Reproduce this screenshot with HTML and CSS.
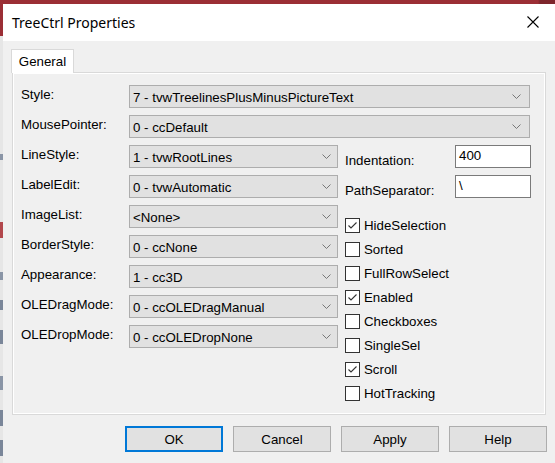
FILE: index.html
```html
<!DOCTYPE html>
<html>
<head>
<meta charset="utf-8">
<title>TreeCtrl Properties</title>
<link rel="stylesheet" href="styles.css">
</head>
<body>
<div class="screen">
  <div class="topbar"></div>
  <div class="main">
    <div class="edge"></div>
    <div class="window">
      <div class="titlebar">
        <span class="title">TreeCtrl Properties</span>
        <svg class="close" width="12" height="12" viewBox="0 0 12 12"><path d="M0.5 0.5 L11.5 11.5 M11.5 0.5 L0.5 11.5" stroke="#000" stroke-width="1.1" fill="none"/></svg>
      </div>
      <div class="client">
        <div class="tabs"><div class="tab">General</div></div>
        <div class="panel">
          <div class="row">
            <span class="lbl">Style:</span>
            <div class="combo long"><span>7 - tvwTreelinesPlusMinusPictureText</span><svg class="chev" width="9" height="5" viewBox="0 0 9 5"><path d="M0.5 0.5 L4.5 4.5 L8.5 0.5" stroke="#777" fill="none"/></svg></div>
          </div>
          <div class="row">
            <span class="lbl">MousePointer:</span>
            <div class="combo long"><span>0 - ccDefault</span><svg class="chev" width="9" height="5" viewBox="0 0 9 5"><path d="M0.5 0.5 L4.5 4.5 L8.5 0.5" stroke="#777" fill="none"/></svg></div>
          </div>
          <div class="split">
            <div class="left">
              <div class="row"><span class="lbl">LineStyle:</span><div class="combo short"><span>1 - tvwRootLines</span><svg class="chev" width="9" height="5" viewBox="0 0 9 5"><path d="M0.5 0.5 L4.5 4.5 L8.5 0.5" stroke="#777" fill="none"/></svg></div></div>
              <div class="row"><span class="lbl">LabelEdit:</span><div class="combo short"><span>0 - tvwAutomatic</span><svg class="chev" width="9" height="5" viewBox="0 0 9 5"><path d="M0.5 0.5 L4.5 4.5 L8.5 0.5" stroke="#777" fill="none"/></svg></div></div>
              <div class="row"><span class="lbl">ImageList:</span><div class="combo short"><span>&lt;None&gt;</span><svg class="chev" width="9" height="5" viewBox="0 0 9 5"><path d="M0.5 0.5 L4.5 4.5 L8.5 0.5" stroke="#777" fill="none"/></svg></div></div>
              <div class="row"><span class="lbl">BorderStyle:</span><div class="combo short"><span>0 - ccNone</span><svg class="chev" width="9" height="5" viewBox="0 0 9 5"><path d="M0.5 0.5 L4.5 4.5 L8.5 0.5" stroke="#777" fill="none"/></svg></div></div>
              <div class="row"><span class="lbl">Appearance:</span><div class="combo short"><span>1 - cc3D</span><svg class="chev" width="9" height="5" viewBox="0 0 9 5"><path d="M0.5 0.5 L4.5 4.5 L8.5 0.5" stroke="#777" fill="none"/></svg></div></div>
              <div class="row"><span class="lbl">OLEDragMode:</span><div class="combo short"><span>0 - ccOLEDragManual</span><svg class="chev" width="9" height="5" viewBox="0 0 9 5"><path d="M0.5 0.5 L4.5 4.5 L8.5 0.5" stroke="#777" fill="none"/></svg></div></div>
              <div class="row"><span class="lbl">OLEDropMode:</span><div class="combo short"><span>0 - ccOLEDropNone</span><svg class="chev" width="9" height="5" viewBox="0 0 9 5"><path d="M0.5 0.5 L4.5 4.5 L8.5 0.5" stroke="#777" fill="none"/></svg></div></div>
            </div>
            <div class="right">
              <div class="row"><span class="rlbl">Indentation:</span><div class="textbox">400</div></div>
              <div class="row"><span class="rlbl">PathSeparator:</span><div class="textbox">\</div></div>
              <div class="checks">
                <div class="check"><span class="box"><svg width="13" height="13" viewBox="0 0 13 13"><path d="M2.5 6.5 L5 9 L10.5 3.5" stroke="#333" stroke-width="1.1" fill="none"/></svg></span><span>HideSelection</span></div>
                <div class="check"><span class="box"></span><span>Sorted</span></div>
                <div class="check"><span class="box"></span><span>FullRowSelect</span></div>
                <div class="check"><span class="box"><svg width="13" height="13" viewBox="0 0 13 13"><path d="M2.5 6.5 L5 9 L10.5 3.5" stroke="#333" stroke-width="1.1" fill="none"/></svg></span><span>Enabled</span></div>
                <div class="check"><span class="box"></span><span>Checkboxes</span></div>
                <div class="check"><span class="box"></span><span>SingleSel</span></div>
                <div class="check"><span class="box"><svg width="13" height="13" viewBox="0 0 13 13"><path d="M2.5 6.5 L5 9 L10.5 3.5" stroke="#333" stroke-width="1.1" fill="none"/></svg></span><span>Scroll</span></div>
                <div class="check"><span class="box"></span><span>HotTracking</span></div>
              </div>
            </div>
          </div>
        </div>
        <div class="buttons">
          <div class="btn default">OK</div>
          <div class="btn">Cancel</div>
          <div class="btn">Apply</div>
          <div class="btn">Help</div>
        </div>
      </div>
    </div>
  </div>
</div>
</body>
</html>
```
FILE: styles.css
```css
html, body {
  margin: 0;
  padding: 0;
}
body {
  width: 555px;
  height: 463px;
  overflow: hidden;
  background: #f0f0f0;
  font-family: "Liberation Sans", Arial, sans-serif;
  font-size: 13.3px;
  color: #000;
}
.screen {
  display: flex;
  flex-direction: column;
  width: 555px;
  height: 463px;
}
.topbar {
  height: 4px;
  background: linear-gradient(to right, #9b2e35 0, #9b2e35 538px, #7d252b 540px, #7d252b 555px);
  flex: none;
}
.main {
  display: flex;
  flex: 1;
  min-height: 0;
}
.edge {
  width: 3px;
  flex: none;
  background: linear-gradient(to bottom,
    #9b2e35 0, #9b2e35 32px,
    #e6e6e6 32px, #e6e6e6 150px,
    #8a95a6 150px, #8a95a6 156px,
    #e6e6e6 156px, #e6e6e6 218px,
    #b2474c 218px, #b2474c 234px,
    #e6e6e6 234px, #e6e6e6 268px,
    #8a95a6 268px, #8a95a6 276px,
    #e6e6e6 276px, #e6e6e6 296px,
    #7a8699 296px, #7a8699 306px,
    #e6e6e6 306px, #e6e6e6 326px,
    #7a8699 326px, #7a8699 340px,
    #e6e6e6 340px, #e6e6e6 372px,
    #8a95a6 372px, #8a95a6 386px,
    #e6e6e6 386px, #e6e6e6 406px,
    #7a8699 406px, #7a8699 422px,
    #e6e6e6 422px, #e6e6e6 436px,
    #7a8699 436px, #7a8699 452px,
    #e6e6e6 452px);
}
.window {
  flex: 1;
  display: flex;
  flex-direction: column;
  background: #f0f0f0;
}
.titlebar {
  height: 37px;
  flex: none;
  background: #fff;
  display: flex;
  align-items: center;
  justify-content: space-between;
  padding: 0 16px 0 9px;
}
.title {
  font-family: "Noto Sans", "Open Sans", sans-serif;
  font-size: 14px;
  color: #000;
  margin-top: -1px;
}
.close {
  display: block;
  margin-top: -1px;
}
.client {
  padding: 8px 9px 0 9px;
  display: flex;
  flex-direction: column;
}
.tabs {
  display: flex;
  height: 24px;
  position: relative;
  z-index: 1;
}
.tab {
  margin-left: -1px;
  width: 63px;
  height: 24px;
  box-sizing: border-box;
  border: 1px solid #d9d9d9;
  border-bottom: none;
  background: #fff;
  display: flex;
  align-items: center;
  justify-content: center;
  padding-bottom: 1px;
}
.panel {
  margin-top: -1px;
  height: 343px;
  box-sizing: border-box;
  border: 1px solid #d9d9d9;
  box-shadow: inset 0 0 0 1px #ffffff;
  background: #f0f0f0;
  padding: 12px 0 0 8px;
  display: flex;
  flex-direction: column;
  gap: 7px;
}
.row {
  display: flex;
  align-items: center;
  height: 23px;
}
.lbl {
  width: 108px;
  flex: none;
  margin-top: -4px;
}
.combo {
  box-sizing: border-box;
  height: 23px;
  border: 1px solid #adadad;
  background: #e1e1e1;
  display: flex;
  align-items: center;
  justify-content: space-between;
  padding: 0 8px 0 3px;
}
.combo span {
  padding-top: 1px;
}
.combo.long {
  width: 401px;
  padding-right: 8px;
}
.combo.short {
  width: 209px;
  padding-right: 6px;
}
.chev {
  display: block;
}
.split {
  display: flex;
  gap: 7px;
}
.left {
  width: 317px;
  display: flex;
  flex-direction: column;
  gap: 7px;
}
.right {
  display: flex;
  flex-direction: column;
  gap: 7px;
}
.rlbl {
  width: 110px;
  flex: none;
  margin-top: 7px;
}
.textbox {
  box-sizing: border-box;
  width: 76px;
  height: 23px;
  border: 1px solid #7a7a7a;
  background: #fff;
  padding: 2px 0 0 3px;
  line-height: 15px;
}
.checks {
  margin-top: 8px;
  display: flex;
  flex-direction: column;
}
.check {
  height: 24px;
  display: flex;
  align-items: center;
  gap: 4px;
}
.box {
  box-sizing: border-box;
  width: 15px;
  height: 15px;
  border: 1px solid #333;
  background: #fff;
  display: flex;
  align-items: center;
  justify-content: center;
}
.box svg {
  display: block;
}
.buttons {
  margin-top: 11px;
  display: flex;
  justify-content: flex-end;
  gap: 10px;
  margin-right: -1px;
}
.btn {
  box-sizing: border-box;
  width: 98px;
  height: 26px;
  border: 1px solid #adadad;
  background: #e1e1e1;
  display: flex;
  align-items: center;
  justify-content: center;
}
.btn.default {
  border: 2px solid #0078d7;
}
```
